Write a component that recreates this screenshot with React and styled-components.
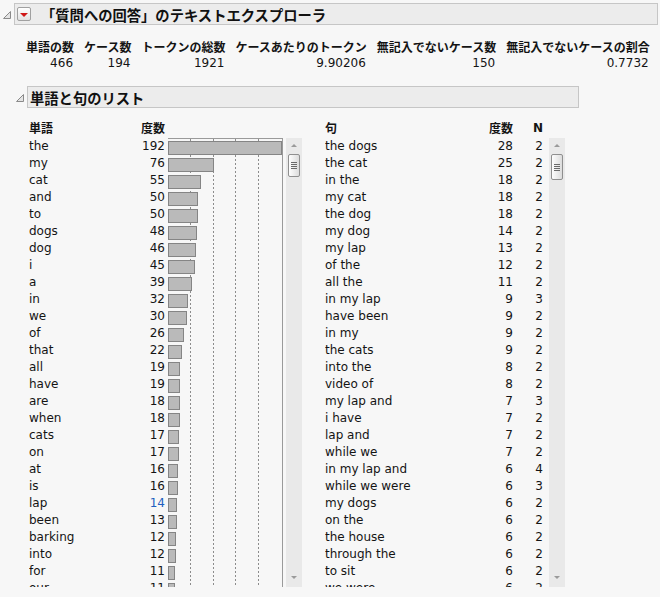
import React from "react";
import styled, { createGlobalStyle } from "styled-components";

const GlobalStyle = createGlobalStyle`
  body {
    margin: 0;
    background: #f7f7f7;
    color: #141414;
    font-family: "DejaVu Sans", "Noto Sans CJK JP", sans-serif;
    font-size: 12px;
  }
`;

const words = [
  ["the", 192], ["my", 76], ["cat", 55], ["and", 50], ["to", 50], ["dogs", 48],
  ["dog", 46], ["i", 45], ["a", 39], ["in", 32], ["we", 30], ["of", 26],
  ["that", 22], ["all", 19], ["have", 19], ["are", 18], ["when", 18], ["cats", 17],
  ["on", 17], ["at", 16], ["is", 16], ["lap", 14, true], ["been", 13], ["barking", 12],
  ["into", 12], ["for", 11], ["our", 11],
];

const phrases = [
  ["the dogs", 28, 2], ["the cat", 25, 2], ["in the", 18, 2], ["my cat", 18, 2],
  ["the dog", 18, 2], ["my dog", 14, 2], ["my lap", 13, 2], ["of the", 12, 2],
  ["all the", 11, 2], ["in my lap", 9, 3], ["have been", 9, 2], ["in my", 9, 2],
  ["the cats", 9, 2], ["into the", 8, 2], ["video of", 8, 2], ["my lap and", 7, 3],
  ["i have", 7, 2], ["lap and", 7, 2], ["while we", 7, 2], ["in my lap and", 6, 4],
  ["while we were", 6, 3], ["my dogs", 6, 2], ["on the", 6, 2], ["the house", 6, 2],
  ["through the", 6, 2], ["to sit", 6, 2], ["we were", 6, 2],
];

const stats = [
  ["単語の数", "466"],
  ["ケース数", "194"],
  ["トークンの総数", "1921"],
  ["ケースあたりのトークン", "9.90206"],
  ["無記入でないケース数", "150"],
  ["無記入でないケースの割合", "0.7732"],
];

const Page = styled.div`
  padding: 3px 2px 0 3px;
`;

const OutlineRow = styled.div`
  display: flex;
  align-items: flex-start;
  margin-left: ${(p) => p.indent || 0}px;
  margin-top: ${(p) => p.top || 0}px;
  width: ${(p) => (p.width ? `${p.width}px` : "auto")};
`;

const Disclosure = styled.div`
  width: 11px;
  flex: none;
  padding-top: 8px;
  svg { display: block; }
`;

const TitleBox = styled.div`
  flex: 1;
  height: 20px;
  display: flex;
  align-items: center;
  gap: 10px;
  padding-left: 2px;
  background: #ececec;
  border: 1px solid #c6c6c6;
`;

const DropButton = styled.div`
  width: 12px;
  height: 12px;
  border: 1px solid #a0a0a0;
  border-radius: 2px;
  background: linear-gradient(#ffffff, #e2e2e2);
  display: flex;
  align-items: center;
  justify-content: center;
  &::after {
    content: "";
    border-left: 4px solid transparent;
    border-right: 4px solid transparent;
    border-top: 4px solid #d01818;
    margin-top: 1px;
  }
`;

const Title = styled.span`
  font-family: "Noto Sans CJK JP", sans-serif;
  font-weight: bold;
  font-size: 14.3px;
  color: #111;
  white-space: nowrap;
`;

const StatsGrid = styled.div`
  display: grid;
  grid-template-columns: repeat(6, auto);
  justify-content: start;
  column-gap: 10px;
  margin: 13px 0 0 23px;
`;

const StatHead = styled.div`
  font-family: "Noto Sans CJK JP", sans-serif;
  font-weight: bold;
  font-size: 12px;
  height: 17px;
  line-height: 17px;
  white-space: nowrap;
`;

const StatValue = styled.div`
  text-align: right;
  height: 17px;
  line-height: 17px;
  padding-right: 1px;
`;

const Lists = styled.div`
  display: flex;
  margin: 12px 0 0 26px;
`;

const Panel = styled.div`
  display: flex;
  flex-direction: column;
  margin-left: ${(p) => p.offset || 0}px;
`;

const HeadRow = styled.div`
  display: flex;
  height: 16px;
  line-height: 16px;
  margin-bottom: 2px;
`;

const HeadCell = styled.div`
  width: ${(p) => p.w}px;
  text-align: ${(p) => (p.right ? "right" : "left")};
  font-family: ${(p) => (p.latin ? "\"DejaVu Sans\"" : "\"Noto Sans CJK JP\"")}, sans-serif;
  font-weight: bold;
  font-size: 12px;
`;

const Body = styled.div`
  display: flex;
`;

const Viewport = styled.div`
  display: flex;
  height: 449px;
  overflow: hidden;
`;

const Column = styled.div`
  width: ${(p) => p.w}px;
  flex: none;
`;

const Cell = styled.div`
  height: 17px;
  line-height: 17px;
  white-space: nowrap;
  text-align: ${(p) => (p.right ? "right" : "left")};
  color: ${(p) => (p.link ? "#1f5fbf" : "#141414")};
`;

const dash = "linear-gradient(#8c8c8c 50%, transparent 50%)";

const Chart = styled.div`
  width: 114px;
  flex: none;
  margin-left: 3px;
  border-top: 1px solid #9a9a9a;
  border-right: 1px solid #9a9a9a;
  background-image: ${dash}, ${dash}, ${dash}, ${dash};
  background-size: 1px 4px;
  background-repeat: repeat-y;
  background-position: 22px 0, 45px 0, 67px 0, 90px 0;
  padding-top: 1px;
`;

const BarRow = styled.div`
  height: 17px;
  padding-top: 1px;
  box-sizing: border-box;
`;

const Bar = styled.div`
  height: 14px;
  box-sizing: border-box;
  background: #bababa;
  border: 1px solid #858585;
`;

const ScrollBar = styled.div`
  width: 16px;
  height: 449px;
  margin-left: ${(p) => p.gap}px;
  background: #e9e9e9;
  display: flex;
  flex-direction: column;
  align-items: center;
`;

const Arrow = styled.div`
  border-left: 3px solid transparent;
  border-right: 3px solid transparent;
  ${(p) => (p.down ? "border-top" : "border-bottom")}: 3px solid #9a9a9a;
  margin-top: ${(p) => (p.down ? "auto" : "6px")};
  margin-bottom: ${(p) => (p.down ? "8px" : "0")};
`;

const Thumb = styled.div`
  width: 12px;
  height: ${(p) => p.size}px;
  margin-top: 7px;
  box-sizing: border-box;
  border: 1px solid #8f8f8f;
  border-radius: 2px;
  background: linear-gradient(to right, #fdfdfd, #dcdcdc);
  display: flex;
  flex-direction: column;
  justify-content: center;
  align-items: center;
  gap: 1px;
  span {
    width: 6px;
    height: 1px;
    background: #6a6a6a;
  }
`;

function Triangle() {
  return (
    <svg width="8" height="8" viewBox="0 0 8 8">
      <polygon points="7.5,0.5 7.5,7.5 0.5,7.5" fill="#e4e4e4" stroke="#8a8a8a" strokeWidth="1" />
    </svg>
  );
}

function Scroll({ gap, thumb }) {
  return (
    <ScrollBar gap={gap}>
      <Arrow />
      <Thumb size={thumb}>
        <span />
        <span />
        <span />
        <span />
      </Thumb>
      <Arrow down />
    </ScrollBar>
  );
}

export default function App() {
  return (
    <Page>
      <GlobalStyle />
      <OutlineRow>
        <Disclosure>
          <Triangle />
        </Disclosure>
        <TitleBox>
          <DropButton />
          <Title>「質問への回答」のテキストエクスプローラ</Title>
        </TitleBox>
      </OutlineRow>

      <StatsGrid>
        {stats.map(([h]) => (
          <StatHead key={h}>{h}</StatHead>
        ))}
        {stats.map(([h, v]) => (
          <StatValue key={h}>{v}</StatValue>
        ))}
      </StatsGrid>

      <OutlineRow indent={13} top={14} width={563}>
        <Disclosure>
          <Triangle />
        </Disclosure>
        <TitleBox>
          <Title>単語と句のリスト</Title>
        </TitleBox>
      </OutlineRow>

      <Lists>
        <Panel>
          <HeadRow>
            <HeadCell w={100}>単語</HeadCell>
            <HeadCell w={36} right>度数</HeadCell>
          </HeadRow>
          <Body>
            <Viewport>
              <Column w={100}>
                {words.map(([w]) => (
                  <Cell key={w}>{w}</Cell>
                ))}
              </Column>
              <Column w={36}>
                {words.map(([w, n, link]) => (
                  <Cell key={w} right link={link}>{n}</Cell>
                ))}
              </Column>
              <Chart>
                {words.map(([w, n]) => (
                  <BarRow key={w}>
                    <Bar style={{ width: Math.round(n * 0.588) + 1 }} />
                  </BarRow>
                ))}
              </Chart>
            </Viewport>
            <Scroll gap={3} thumb={23} />
          </Body>
        </Panel>

        <Panel offset={23}>
          <HeadRow>
            <HeadCell w={140}>句</HeadCell>
            <HeadCell w={48} right>度数</HeadCell>
            <HeadCell w={30} right latin>N</HeadCell>
          </HeadRow>
          <Body>
            <Viewport>
              <Column w={140}>
                {phrases.map(([p]) => (
                  <Cell key={p}>{p}</Cell>
                ))}
              </Column>
              <Column w={48}>
                {phrases.map(([p, n]) => (
                  <Cell key={p} right>{n}</Cell>
                ))}
              </Column>
              <Column w={30}>
                {phrases.map(([p, , k]) => (
                  <Cell key={p} right>{k}</Cell>
                ))}
              </Column>
            </Viewport>
            <Scroll gap={6} thumb={26} />
          </Body>
        </Panel>
      </Lists>
    </Page>
  );
}
